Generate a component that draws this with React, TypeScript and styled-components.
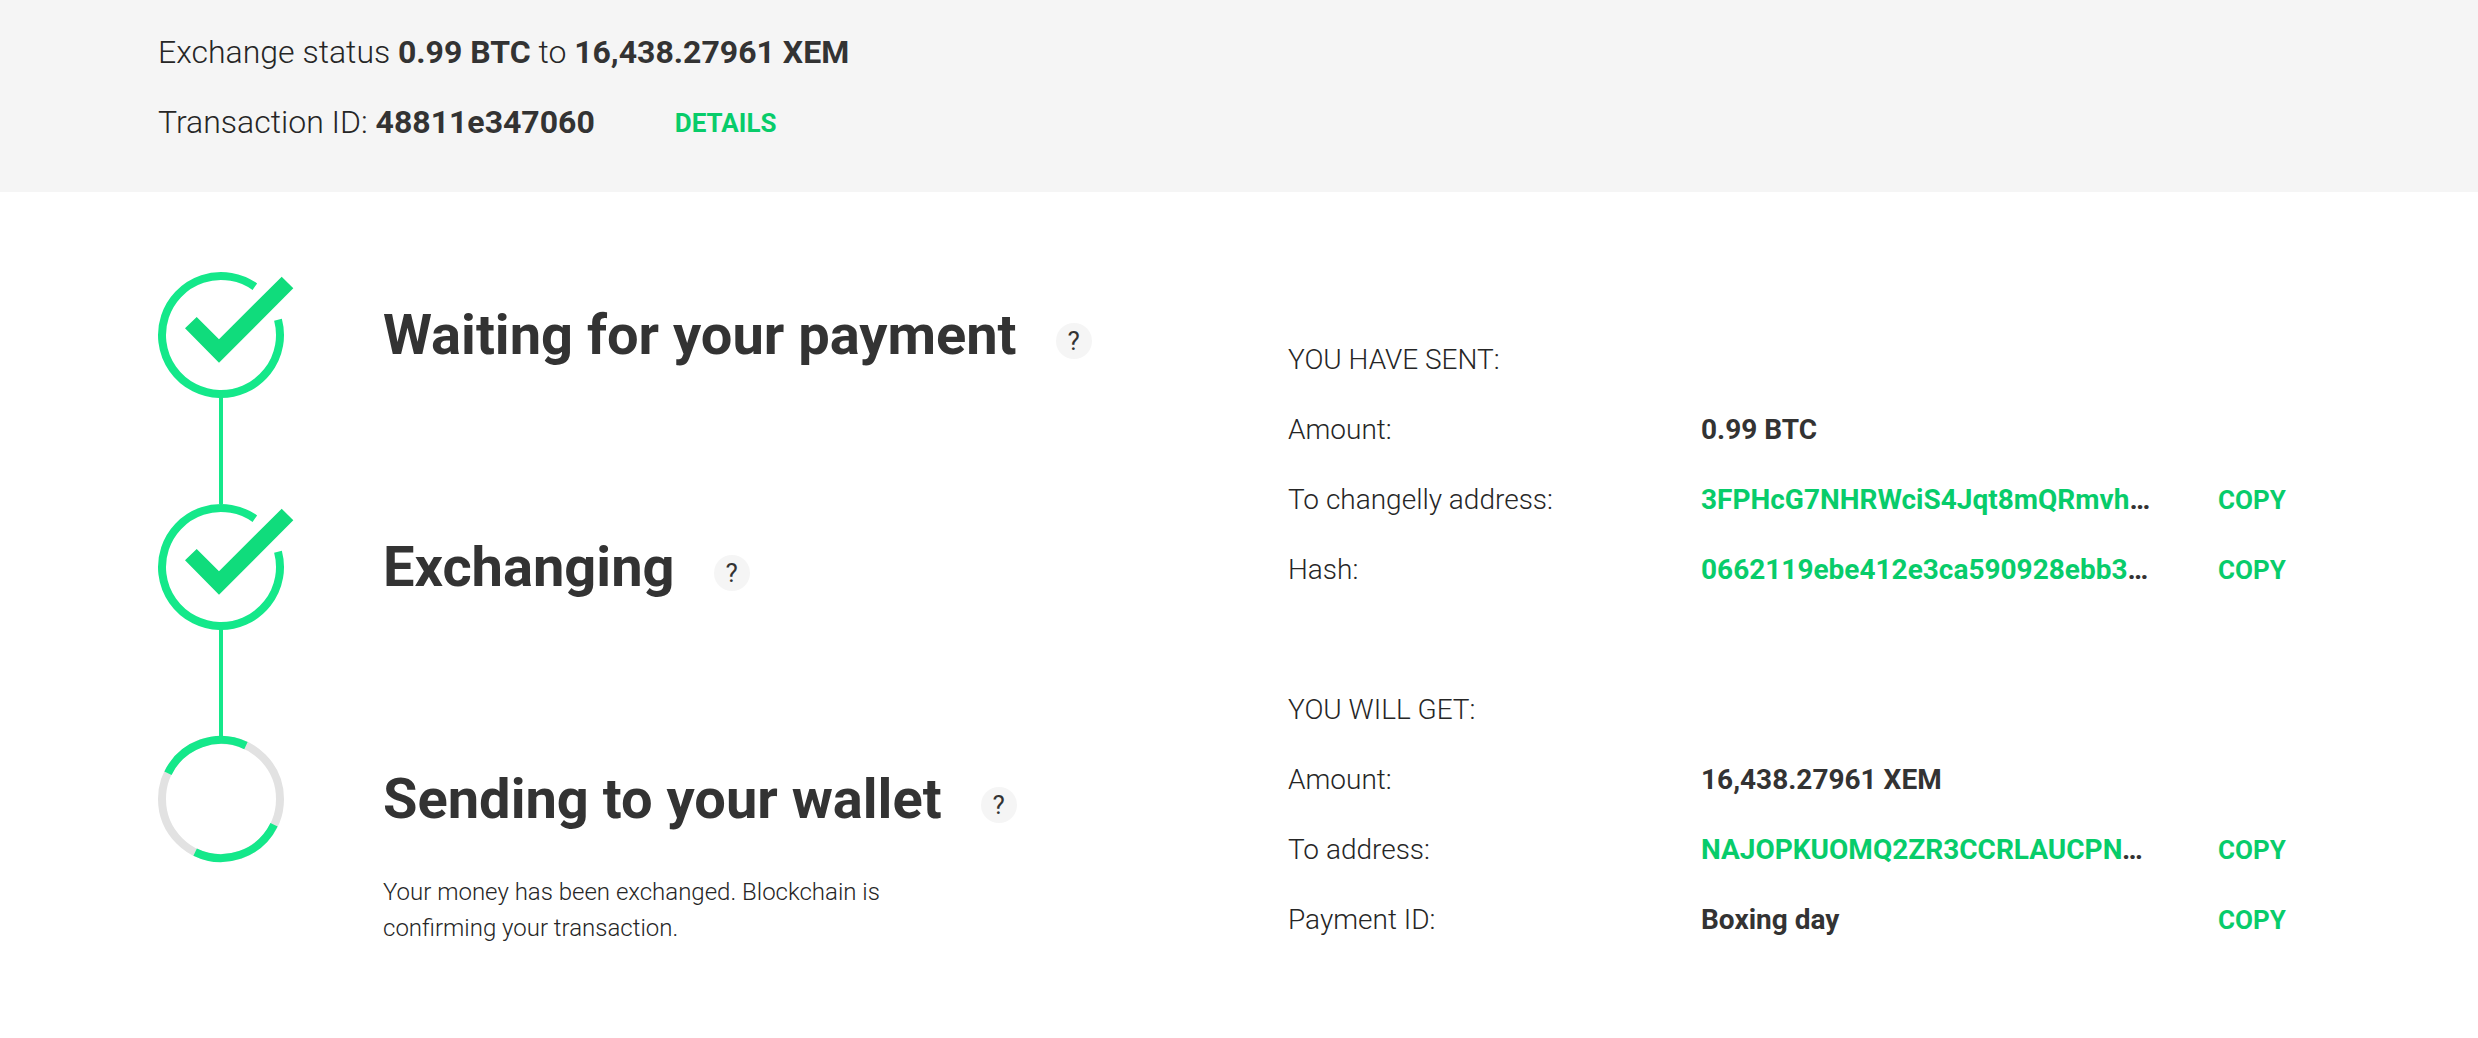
import React from 'react'
import styled, { createGlobalStyle } from 'styled-components'

const GREEN_LINE = '#14e88a'
const GREEN_CHECK = '#10dc7c'
const GREEN_TEXT = '#08cc6a'
const INK = '#333333'
const LIGHT_INK = '#262626'

const GlobalStyle = createGlobalStyle`
    html, body {
        margin: 0;
        padding: 0;
        background: #ffffff;
    }
    body {
        font-family: Roboto, "Liberation Sans", sans-serif;
        color: ${INK};
    }
`

const StatusBar = styled.header`
    height: 192px;
    box-sizing: border-box;
    padding: 17px 158px 0;
    background: #f5f5f5;
`

const StatusLine = styled.div`
    display: flex;
    align-items: center;
    height: 70px;
    font-size: 32px;
    font-weight: 300;
    white-space: pre;
    color: ${LIGHT_INK};
`

const Strong = styled.b`
    font-weight: 700;
    color: ${INK};
`

const DetailsLink = styled.a`
    margin: 2px 0 0 80px;
    font-size: 26px;
    font-weight: 700;
    color: ${GREEN_TEXT};
`

const Main = styled.main`
    display: flex;
    padding-left: 158px;
`

const StepList = styled.section`
    width: 1130px;
    padding-top: 80px;
`

const Step = styled.div`
    display: flex;
    gap: 99px;
`

const Rail = styled.div`
    display: flex;
    flex-direction: column;
    align-items: center;
    width: 126px;
    flex: none;
`

const Connector = styled.div`
    width: 4px;
    height: 107px;
    background: ${GREEN_LINE};
`

const Ring = styled.svg`
    display: block;
    flex: none;
    width: 126px;
    height: 125px;
    overflow: visible;
`

const StepBody = styled.div`
    display: flex;
    flex-direction: column;
`

const TitleRow = styled.div`
    display: flex;
    align-items: center;
    gap: 39px;
    height: 126px;
`

const StepTitle = styled.h2`
    margin: 0;
    font-size: 56px;
    font-weight: 700;
    color: ${INK};
`

const HelpBadge = styled.span`
    display: flex;
    align-items: center;
    justify-content: center;
    width: 36px;
    height: 36px;
    margin-top: 12px;
    border-radius: 50%;
    background: #f5f5f5;
    font-size: 26px;
    font-weight: 400;
    color: ${INK};
`

const StepNote = styled.p`
    width: 560px;
    margin: 12px 0 0;
    font-size: 24px;
    font-weight: 300;
    line-height: 36px;
    color: ${LIGHT_INK};
`

const Summary = styled.section`
    padding-top: 133px;
`

const Group = styled.div`
    margin-bottom: 70px;
`

const GroupTitle = styled.div`
    height: 70px;
    line-height: 70px;
    font-size: 28px;
    font-weight: 300;
    color: ${LIGHT_INK};
`

const Row = styled.div`
    display: grid;
    grid-template-columns: 413px 452px auto;
    height: 70px;
    line-height: 70px;
    font-size: 28px;
`

const RowLabel = styled.span`
    font-weight: 300;
    color: ${LIGHT_INK};
`

const RowValue = styled.span`
    overflow: hidden;
    white-space: nowrap;
    text-overflow: ellipsis;
    font-weight: 700;
    color: ${INK};
`

const Hash = styled.span`
    color: ${GREEN_TEXT};
`

const CopyLink = styled.a`
    margin-left: 65px;
    font-size: 26px;
    font-weight: 700;
    color: ${GREEN_TEXT};
`

const CENTER = 63
const RADIUS = 59

const point = (deg: number) => {
    const rad = (deg * Math.PI) / 180
    return `${(CENTER + RADIUS * Math.cos(rad)).toFixed(2)} ${(CENTER - RADIUS * Math.sin(rad)).toFixed(2)}`
}

// counter-clockwise arc, angles measured from 3 o'clock
const arc = (from: number, to: number) => {
    const large = to - from > 180 ? 1 : 0
    return `M${point(from)} A${RADIUS} ${RADIUS} 0 ${large} 0 ${point(to)}`
}

const DoneIcon = () => (
    <Ring viewBox="0 0 126 125">
        <path d={arc(55, 375)} fill="none" stroke={GREEN_LINE} strokeWidth="8" />
        <polygon points="123.7,4.7 135.3,16.3 61,90.7 27,56.3 38.7,45 61,67.3" fill={GREEN_CHECK} />
    </Ring>
)

const PendingIcon = () => (
    <Ring viewBox="0 0 126 125">
        <circle cx={CENTER} cy={CENTER} r={RADIUS} fill="none" stroke="#e2e2e2" strokeWidth="8" />
        <path d={arc(65, 154)} fill="none" stroke={GREEN_LINE} strokeWidth="8" />
        <path d={arc(244, 334)} fill="none" stroke={GREEN_LINE} strokeWidth="8" />
    </Ring>
)

const SummaryRow = ({ label, value, hash, copy }: { label: string; value: string; hash?: boolean; copy?: boolean }) => (
    <Row>
        <RowLabel>{label}</RowLabel>
        <RowValue>{hash ? <Hash>{value}</Hash> : value}</RowValue>
        {copy && <CopyLink>COPY</CopyLink>}
    </Row>
)

const App = () => (
    <>
        <GlobalStyle />
        <StatusBar>
            <StatusLine>
                Exchange status <Strong>0.99 BTC</Strong> to <Strong>16,438.27961 XEM</Strong>
            </StatusLine>
            <StatusLine>
                Transaction ID: <Strong>48811e347060</Strong>
                <DetailsLink>DETAILS</DetailsLink>
            </StatusLine>
        </StatusBar>
        <Main>
            <StepList>
                <Step>
                    <Rail>
                        <DoneIcon />
                        <Connector />
                    </Rail>
                    <StepBody>
                        <TitleRow>
                            <StepTitle>Waiting for your payment</StepTitle>
                            <HelpBadge>?</HelpBadge>
                        </TitleRow>
                    </StepBody>
                </Step>
                <Step>
                    <Rail>
                        <DoneIcon />
                        <Connector />
                    </Rail>
                    <StepBody>
                        <TitleRow>
                            <StepTitle>Exchanging</StepTitle>
                            <HelpBadge>?</HelpBadge>
                        </TitleRow>
                    </StepBody>
                </Step>
                <Step>
                    <Rail>
                        <PendingIcon />
                    </Rail>
                    <StepBody>
                        <TitleRow>
                            <StepTitle>Sending to your wallet</StepTitle>
                            <HelpBadge>?</HelpBadge>
                        </TitleRow>
                        <StepNote>Your money has been exchanged. Blockchain is confirming your transaction.</StepNote>
                    </StepBody>
                </Step>
            </StepList>
            <Summary>
                <Group>
                    <GroupTitle>YOU HAVE SENT:</GroupTitle>
                    <SummaryRow label="Amount:" value="0.99 BTC" />
                    <SummaryRow label="To changelly address:" value="3FPHcG7NHRWciS4Jqt8mQRmvhUz" hash copy />
                    <SummaryRow label="Hash:" value="0662119ebe412e3ca590928ebb3fd71" hash copy />
                </Group>
                <Group>
                    <GroupTitle>YOU WILL GET:</GroupTitle>
                    <SummaryRow label="Amount:" value="16,438.27961 XEM" />
                    <SummaryRow label="To address:" value="NAJOPKUOMQ2ZR3CCRLAUCPNT5" hash copy />
                    <SummaryRow label="Payment ID:" value="Boxing day" copy />
                </Group>
            </Summary>
        </Main>
    </>
)

export default App
